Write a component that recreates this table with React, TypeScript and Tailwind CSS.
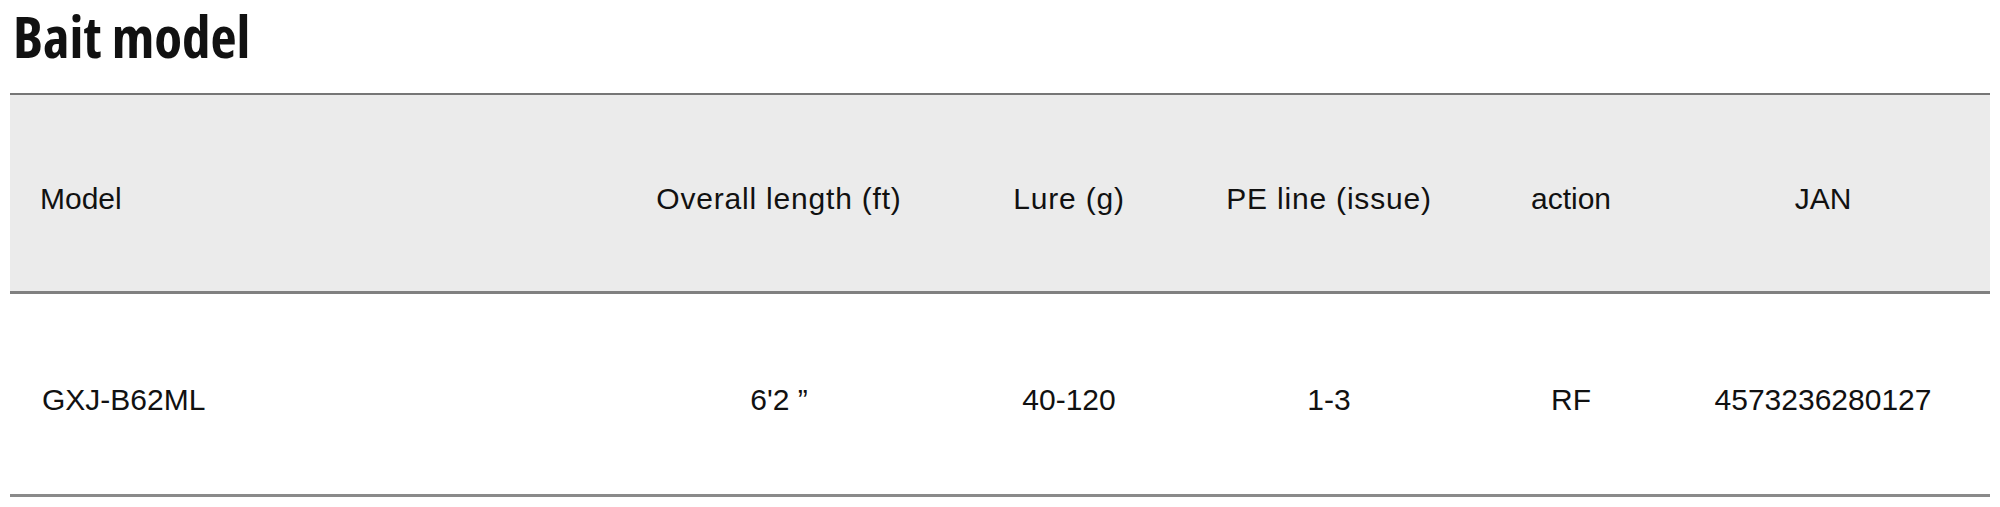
const headers = [
  { label: 'Overall length (ft)', wide: true },
  { label: 'Lure (g)', wide: true },
  { label: 'PE line (issue)', wide: true },
  { label: 'action', wide: false },
  { label: 'JAN', wide: false },
]
const row = { model: 'GXJ-B62ML', cells: ['6\'2 ”', '40-120', '1-3', 'RF', '4573236280127'] }

export default function App() {
  return (
    <div className="w-[2000px] h-[507px] bg-white overflow-hidden">
      <h2
        className="pl-[13px] h-[93px] text-[57px] leading-[72px] font-bold text-[#111] font-stretch-condensed"
        style={{ fontFamily: "'Open Sans', sans-serif" }}
      >
        Bait model
      </h2>

      <div className="mx-[10px] w-[1980px]" style={{ fontFamily: "'Liberation Sans', Arial, sans-serif" }}>
        {/* head */}
        <div className="grid grid-cols-[582px_374px_206px_314px_170px_334px] h-[201px] bg-[#ebebeb] border-t-2 border-t-[#767676] border-b-[3px] border-b-[#808080] text-[30px] text-[#111] items-center pt-[10px]">
          <div className="pl-[30px]">Model</div>
          {headers.map((h) => (
            <div key={h.label} className={h.wide ? 'text-center tracking-[0.8px]' : 'text-center'}>
              {h.label}
            </div>
          ))}
        </div>

        {/* body */}
        <div className="grid grid-cols-[582px_374px_206px_314px_170px_334px] h-[203px] border-b-[3px] border-b-[#8a8a8a] text-[30px] text-[#111] items-center pt-[10px]">
          <div className="pl-[32px]">{row.model}</div>
          {row.cells.map((c) => (
            <div key={c} className="text-center">
              {c}
            </div>
          ))}
        </div>
      </div>
    </div>
  )
}
